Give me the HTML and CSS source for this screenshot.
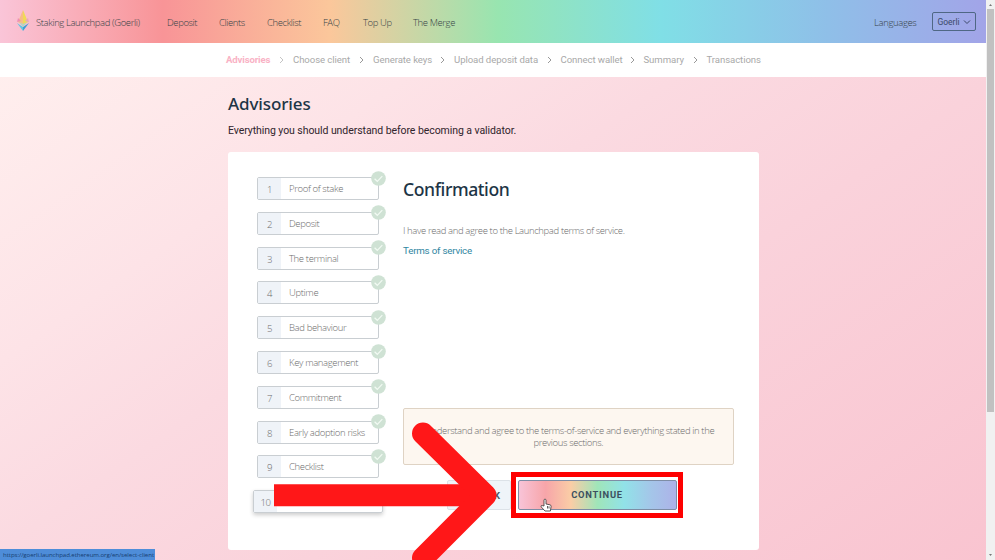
FILE: index.html
```html
<!DOCTYPE html>
<html lang="en">
<head>
<meta charset="utf-8">
<title>Staking Launchpad</title>
<link rel="stylesheet" href="styles.css">
</head>
<body>
<div class="window">
  <div class="page">
    <header class="topbar">
      <svg class="logo" viewBox="0 0 14 24">
        <path d="M7 1 2 13l5 3z" fill="#f6bd87"/><path d="M7 1v15l5-3z" fill="#f0d957"/>
        <path d="m2 9-1 4 4-1z" fill="#ef8fb4"/><path d="m12 9 1 4-4-1z" fill="#e9a5bc"/>
        <path d="m1 14 6 4v4z" fill="#62c6df"/><path d="m13 14-6 4v4z" fill="#3d9fd6"/>
        <path d="m3 13 4 2 4-2-4 5z" fill="#b3d5c4"/>
      </svg>
      <span class="brand">Staking Launchpad (Goerli)</span>
      <nav class="nav">
        <a class="n1">Deposit</a><a class="n2">Clients</a><a class="n3">Checklist</a><a class="n4">FAQ</a><a class="n5">Top Up</a><a class="n6">The Merge</a>
      </nav>
      <span class="languages">Languages</span>
      <button class="network">Goerli<svg viewBox="0 0 8 6"><path d="m1 1.5 3 3 3-3"/></svg></button>
    </header>
    <nav class="crumbs">
      <a class="c1 current">Advisories</a><svg class="light" viewBox="0 0 5 8"><path d="m1 1 3 3-3 3"/></svg>
      <a class="c2">Choose client</a><svg viewBox="0 0 5 8"><path d="m1 1 3 3-3 3"/></svg>
      <a class="c3">Generate keys</a><svg viewBox="0 0 5 8"><path d="m1 1 3 3-3 3"/></svg>
      <a class="c4">Upload deposit data</a><svg viewBox="0 0 5 8"><path d="m1 1 3 3-3 3"/></svg>
      <a class="c5">Connect wallet</a><svg viewBox="0 0 5 8"><path d="m1 1 3 3-3 3"/></svg>
      <a class="c6">Summary</a><svg viewBox="0 0 5 8"><path d="m1 1 3 3-3 3"/></svg>
      <a class="c7">Transactions</a>
    </nav>
    <main class="content">
      <h1>Advisories</h1>
      <p class="lead">Everything you should understand before becoming a validator.</p>
      <section class="card">
        <ol class="steps">
          <li><b>1</b><span>Proof of stake</span><svg viewBox="0 0 15 15"><circle cx="7.5" cy="7.5" r="7.3"/><path d="m3.6 7.7 2.7 2.6 5-5.1"/></svg></li>
          <li><b>2</b><span>Deposit</span><svg viewBox="0 0 15 15"><circle cx="7.5" cy="7.5" r="7.3"/><path d="m3.6 7.7 2.7 2.6 5-5.1"/></svg></li>
          <li><b>3</b><span>The terminal</span><svg viewBox="0 0 15 15"><circle cx="7.5" cy="7.5" r="7.3"/><path d="m3.6 7.7 2.7 2.6 5-5.1"/></svg></li>
          <li><b>4</b><span>Uptime</span><svg viewBox="0 0 15 15"><circle cx="7.5" cy="7.5" r="7.3"/><path d="m3.6 7.7 2.7 2.6 5-5.1"/></svg></li>
          <li><b>5</b><span>Bad behaviour</span><svg viewBox="0 0 15 15"><circle cx="7.5" cy="7.5" r="7.3"/><path d="m3.6 7.7 2.7 2.6 5-5.1"/></svg></li>
          <li><b>6</b><span>Key management</span><svg viewBox="0 0 15 15"><circle cx="7.5" cy="7.5" r="7.3"/><path d="m3.6 7.7 2.7 2.6 5-5.1"/></svg></li>
          <li><b>7</b><span>Commitment</span><svg viewBox="0 0 15 15"><circle cx="7.5" cy="7.5" r="7.3"/><path d="m3.6 7.7 2.7 2.6 5-5.1"/></svg></li>
          <li><b>8</b><span>Early adoption risks</span><svg viewBox="0 0 15 15"><circle cx="7.5" cy="7.5" r="7.3"/><path d="m3.6 7.7 2.7 2.6 5-5.1"/></svg></li>
          <li><b>9</b><span>Checklist</span><svg viewBox="0 0 15 15"><circle cx="7.5" cy="7.5" r="7.3"/><path d="m3.6 7.7 2.7 2.6 5-5.1"/></svg></li>
          <li class="active"><b>10</b></li>
        </ol>
        <div class="detail">
          <h2>Confirmation</h2>
          <p class="agree">I have read and agree to the Launchpad terms of service.</p>
          <a class="terms">Terms of service</a>
          <div class="notice"><span>I understand and agree to the terms-of-service and everything stated in the</span><span>previous sections.</span></div>
          <div class="actions">
            <button class="back">BACK</button>
            <div class="highlight"><button class="continue">CONTINUE</button></div>
          </div>
        </div>
      </section>
    </main>
  </div>
  <aside class="scrollbar"><i class="up"></i><i class="thumb"></i><i class="down"></i></aside>
</div>
<svg class="arrow" viewBox="0 0 240 150">
  <path d="M4 84.3h206" class="shaft"/><path d="m153 22.5 62.5 61.8L153 147" class="head"/>
</svg>
<svg class="cursor" viewBox="0 0 12 14"><path d="M4 8V2.2C4 .7 6 .7 6 2.2V6l4 .8c.8.2 1.2.8 1.1 1.6L10.4 13H5L1.4 9.1C.4 7.8 1.8 7 2.7 7.7z"/><path d="M7.5 8v2.5M9 8.3v2.2"/></svg>
<div class="status">https://goerli.launchpad.ethereum.org/en/select-client</div>
</body>
</html>
```
FILE: styles.css
```css
* { box-sizing: border-box; }
body { margin: 0; overflow: hidden; font-family: "Open Sans", "Noto Sans", sans-serif; color: #6c6c6c; }
button { font: inherit; margin: 0; }
svg { display: block; flex: none; }
.window { display: flex; width: 995px; height: 560px; overflow: hidden; }
.page { width: 986px; background: linear-gradient(145deg, #ffefee 5%, #fde3e7 29%, #fbdae1 44%, #fad2db 62%, #f9c4d0 100%); }

.topbar { display: flex; align-items: center; height: 43px; padding: 2px 10px 0 16px; font-size: 9.5px; font-weight: 300; letter-spacing: -.36px; color: #364346; background: linear-gradient(90deg, #fac5d8 0%, #f89497 16.5%, #fbc79b 33.5%, #98e5b0 50.5%, #80dfe6 67%, #8fbfe8 84%, #a2a4e8 100%); white-space: nowrap; }
.logo { width: 14px; height: 24px; margin: -4px 6px 0 0; }
.brand { width: 131px; letter-spacing: -.4px; }
.nav { display: flex; flex: 1; letter-spacing: -.4px; }
.n1 { width: 52px; }
.n2 { width: 48px; }
.n3 { width: 56px; }
.n4 { width: 40px; }
.n5 { width: 50px; }
.languages { width: 58px; letter-spacing: -.36px; }
.network { display: flex; align-items: center; justify-content: center; gap: 3px; width: 44px; height: 19px; margin-top: -2px; padding: 0; border: 1px solid #4f6784; border-radius: 2px; background: none; font: 8.5px Roboto, sans-serif; letter-spacing: 0; color: #3c4968; }
.network svg { width: 8px; height: 6px; fill: none; stroke: #3c4968; }

.crumbs { display: flex; align-items: center; height: 34px; padding: 0 0 1px 226px; background: #fff; font: 9.6px Roboto, sans-serif; letter-spacing: -.08px; color: #a9a9a9; white-space: nowrap; }
.crumbs svg { width: 5px; height: 8px; margin-right: 9px; fill: none; stroke: #999; }
.crumbs .light { stroke: #c4c4c4; }
.crumbs .current { color: #f9b2c5; font-weight: 700; letter-spacing: -.15px; }
.c1 { width: 53px; }
.c2 { width: 66px; }
.c3 { width: 67px; }
.c4 { width: 92.5px; }
.c5 { width: 69px; }
.c6 { width: 49px; }

.content { width: 530.5px; margin-left: 228px; }
h1, h2 { margin: 0; font-family: "Noto Sans", sans-serif; font-weight: 500; color: #1d3546; }
h1 { padding-top: 16px; font-size: 17px; line-height: 22px; letter-spacing: -.1px; }
.lead { margin: 8.5px 0 0; font: 10.5px/14px Roboto, sans-serif; letter-spacing: -.07px; color: #30242c; }
.card { display: flex; height: 398px; margin-top: 14.5px; padding: 25px 25px 0 29px; border-radius: 3px; background: #fff; }
.steps { display: flex; flex-direction: column; gap: 11.8px; width: 122px; margin: 0; padding: 0; list-style: none; font-size: 9.5px; font-weight: 300; letter-spacing: -.36px; }
.steps li { position: relative; display: flex; height: 23px; border: 1px solid #c9ced2; border-radius: 2px; line-height: 22px; white-space: nowrap; }
.steps b { width: 23px; background: #eff3f8; font-weight: 300; font-size: 9.6px; line-height: 24px; text-align: center; }
.steps span { padding-left: 8px; }
.steps svg { position: absolute; top: -7.5px; right: -8px; width: 15px; height: 15px; }
.steps circle { fill: #cfe2d4; }
.steps path { fill: none; stroke: #f2faf3; stroke-width: 1.2; }
.steps .active { width: 130px; margin: 0 -4px; box-shadow: 0 2px 4px #0003; }

.detail { width: 330.5px; margin-left: 24px; font-size: 9.5px; font-weight: 300; letter-spacing: -.38px; white-space: nowrap; }
h2 { font-size: 17.6px; line-height: 24px; letter-spacing: -.42px; }
.agree { margin: 23px 0 0; line-height: 14px; }
.terms { display: block; margin-top: 5.5px; font: 9.8px/14px Roboto, sans-serif; letter-spacing: -.22px; color: #2f86a1; }
.notice { display: flex; flex-direction: column; height: 57px; margin-top: 150.5px; padding-top: 15.5px; border: 1px solid #dfd3c4; border-radius: 2px; background: #fdf7f0; text-align: center; line-height: 12.5px; }
.actions { display: flex; align-items: flex-start; margin-top: 7px; }
.back { width: 64px; height: 30px; margin: 8px 0 0 44px; padding: 0 0 0 25px; border: 1px solid #dce2e8; border-radius: 2px; background: #eff4f9; text-align: left; font: 700 9.5px Roboto, sans-serif; letter-spacing: .8px; color: #465867; }
.highlight { width: 172px; height: 46px; padding: 3px 1px 3px 1.5px; border: 5px solid #fe0000; background: #fff; }
.continue { display: block; width: 159px; height: 30px; padding-bottom: 2px; border: 1px solid #7e8da5; border-radius: 2px; background: linear-gradient(90deg, #f8c4d8, #f7a5a9 17%, #facda6 33%, #a0e5b9 50%, #91e2e8 67%, #a4c6e9 84%, #adb2e8); font: 700 9.4px Roboto, sans-serif; letter-spacing: .75px; color: #3c5060; }

.scrollbar { display: flex; flex-direction: column; align-items: center; width: 9px; background: #f1f1f1; }
.up { height: 9px; }
.up::before, .down::before { content: ""; display: block; width: 3px; height: 2px; margin-top: 4px; background: #777; clip-path: polygon(50% 0, 100% 100%, 0 100%); }
.thumb { width: 7px; height: 403px; background: #c1c1c1; }
.down { margin-top: 138px; }
.down::before { clip-path: polygon(0 0, 100% 0, 50% 100%); }

.arrow { position: absolute; left: 270px; top: 411px; width: 240px; height: 150px; fill: none; stroke: #ff1718; stroke-width: 22; }
.head { stroke-linecap: round; stroke-linejoin: round; }
.cursor { position: absolute; left: 540px; top: 498px; width: 12px; height: 14px; fill: #fff; stroke: #333; stroke-width: .8; }
.status { position: absolute; left: 0; top: 549px; width: 155px; height: 11px; padding-left: 3px; background: #4e8dd9; font: 6.1px/11px "Open Sans", sans-serif; letter-spacing: -.06px; color: #173e71; white-space: nowrap; }
```
